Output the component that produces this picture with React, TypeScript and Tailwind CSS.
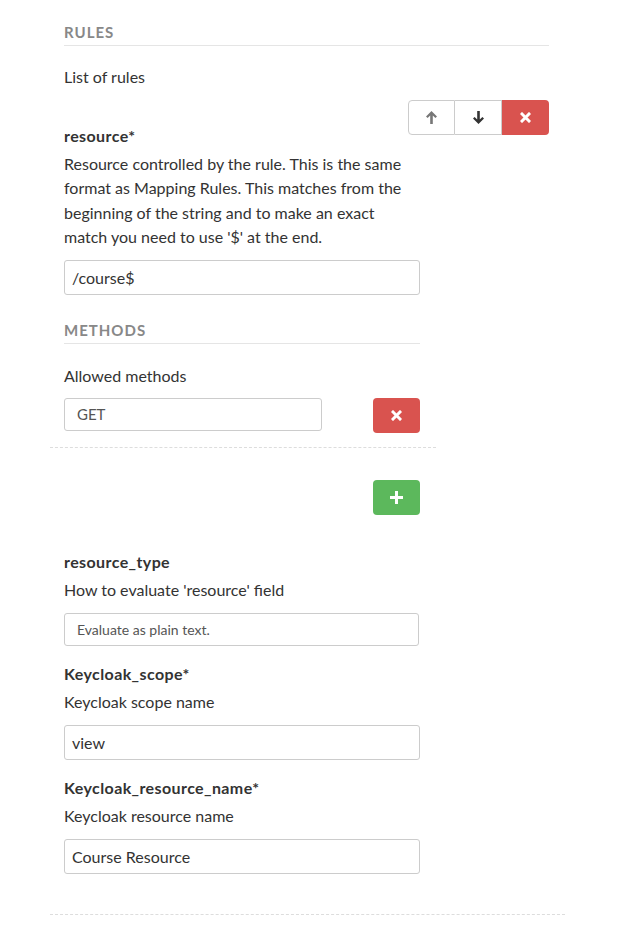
const ArrowUp = ({ color }: { color: string }) => (
    <svg width="11" height="13" viewBox="0 0 11 13" fill={color}>
        <path d="M5.5 0 L11 5.6 L9.4 7.1 L6.8 4.5 L6.8 13 L4.2 13 L4.2 4.5 L1.6 7.1 L0 5.6 Z" />
    </svg>
);

const ArrowDown = ({ color }: { color: string }) => (
    <svg width="11" height="13" viewBox="0 0 11 13" fill={color}>
        <path d="M5.5 13 L11 7.4 L9.4 5.9 L6.8 8.5 L6.8 0 L4.2 0 L4.2 8.5 L1.6 5.9 L0 7.4 Z" />
    </svg>
);

const Times = () => (
    <svg width="11" height="11" viewBox="0 0 11 11" fill="none" stroke="white" strokeWidth="3" strokeLinecap="square">
        <path d="M2 2 L9 9 M9 2 L2 9" />
    </svg>
);

const Plus = () => (
    <svg width="13" height="13" viewBox="0 0 13 13" fill="white">
        <path d="M5 0 H8 V5 H13 V8 H8 V13 H5 V8 H0 V5 H5 Z" />
    </svg>
);

function Field({ label, help, value }: { label: string; help: string; value: string }) {
    return (
        <div className="mt-[16px]">
            <div className="font-bold leading-[24px] tracking-[0.4px]">{label}</div>
            <div className="mt-[4px] leading-[24px]">{help}</div>
            <div className="mt-[11px] h-[35px] w-[356px] border border-[#ccc] rounded-[3px] px-[7px] flex items-center">
                {value}
            </div>
        </div>
    );
}

export default function App() {
    return (
        <div className="w-[623px] min-h-[930px] bg-white text-[16px] text-[#333] font-['Lato',sans-serif]">
            <div className="ml-[50px] w-[515px] pl-[14px] pr-[16px] pt-[22px] pb-[16px] border-b border-dashed border-[#ddd]">
                <div className="text-[15px] font-bold text-[#888] leading-[20px] pb-[3px] border-b border-[#e5e5e5] tracking-[1px]">
                    RULES
                </div>
                <div className="mt-[19px] leading-[24px]">List of rules</div>

                <div className="mt-[11px] flex justify-end">
                    <div className="flex h-[35px]">
                        <button className="w-[47px] border border-[#ccc] rounded-l-[4px] bg-white flex items-center justify-center">
                            <ArrowUp color="#777" />
                        </button>
                        <button className="w-[47px] border border-l-0 border-[#ccc] bg-white flex items-center justify-center">
                            <ArrowDown color="#333" />
                        </button>
                        <button className="w-[47px] rounded-r-[4px] bg-[#d9534f] flex items-center justify-center">
                            <Times />
                        </button>
                    </div>
                </div>

                <div className="-mt-[11px] font-bold leading-[24px] tracking-[0.4px]">resource*</div>
                <div className="mt-[4px] w-[356px] leading-[24.3px]">
                    Resource controlled by the rule. This is the same format as Mapping Rules. This
                    matches from the beginning of the string and to make an exact match you need to
                    use '$' at the end.
                </div>
                <div className="mt-[11px] h-[35px] w-[356px] border border-[#ccc] rounded-[3px] px-[7px] flex items-center">
                    /course$
                </div>

                <div className="mt-[25px] w-[356px] text-[15px] font-bold text-[#888] leading-[20px] pb-[3px] border-b border-[#e5e5e5] tracking-[1px]">
                    METHODS
                </div>
                <div className="mt-[20px] leading-[24px]">Allowed methods</div>

                <div className="-ml-[14px] w-[386px] pl-[14px] pr-[16px] pb-[14px] border-b border-dashed border-[#ddd]">
                    <div className="mt-[10px] flex justify-between items-start">
                        <div className="h-[33px] w-[258px] border border-[#ccc] rounded-[3px] px-[12px] flex items-center text-[15px] text-[#555]">
                            GET
                        </div>
                        <button className="h-[35px] w-[47px] rounded-[4px] bg-[#d9534f] flex items-center justify-center">
                            <Times />
                        </button>
                    </div>
                </div>

                <div className="mt-[32px] w-[356px] flex justify-end">
                    <button className="h-[35px] w-[47px] rounded-[4px] bg-[#5cb85c] flex items-center justify-center">
                        <Plus />
                    </button>
                </div>

                <div className="mt-[35px] font-bold leading-[24px] tracking-[0.4px]">resource_type</div>
                <div className="mt-[4px] leading-[24px]">How to evaluate 'resource' field</div>
                <div className="mt-[11px] h-[33px] w-[355px] border border-[#ccc] rounded-[3px] px-[12px] flex items-center text-[14px] text-[#555]">
                    Evaluate as plain text.
                </div>

                <Field label="Keycloak_scope*" help="Keycloak scope name" value="view" />
                <Field label="Keycloak_resource_name*" help="Keycloak resource name" value="Course Resource" />
                <div className="h-[24px]" />
            </div>
        </div>
    );
}
